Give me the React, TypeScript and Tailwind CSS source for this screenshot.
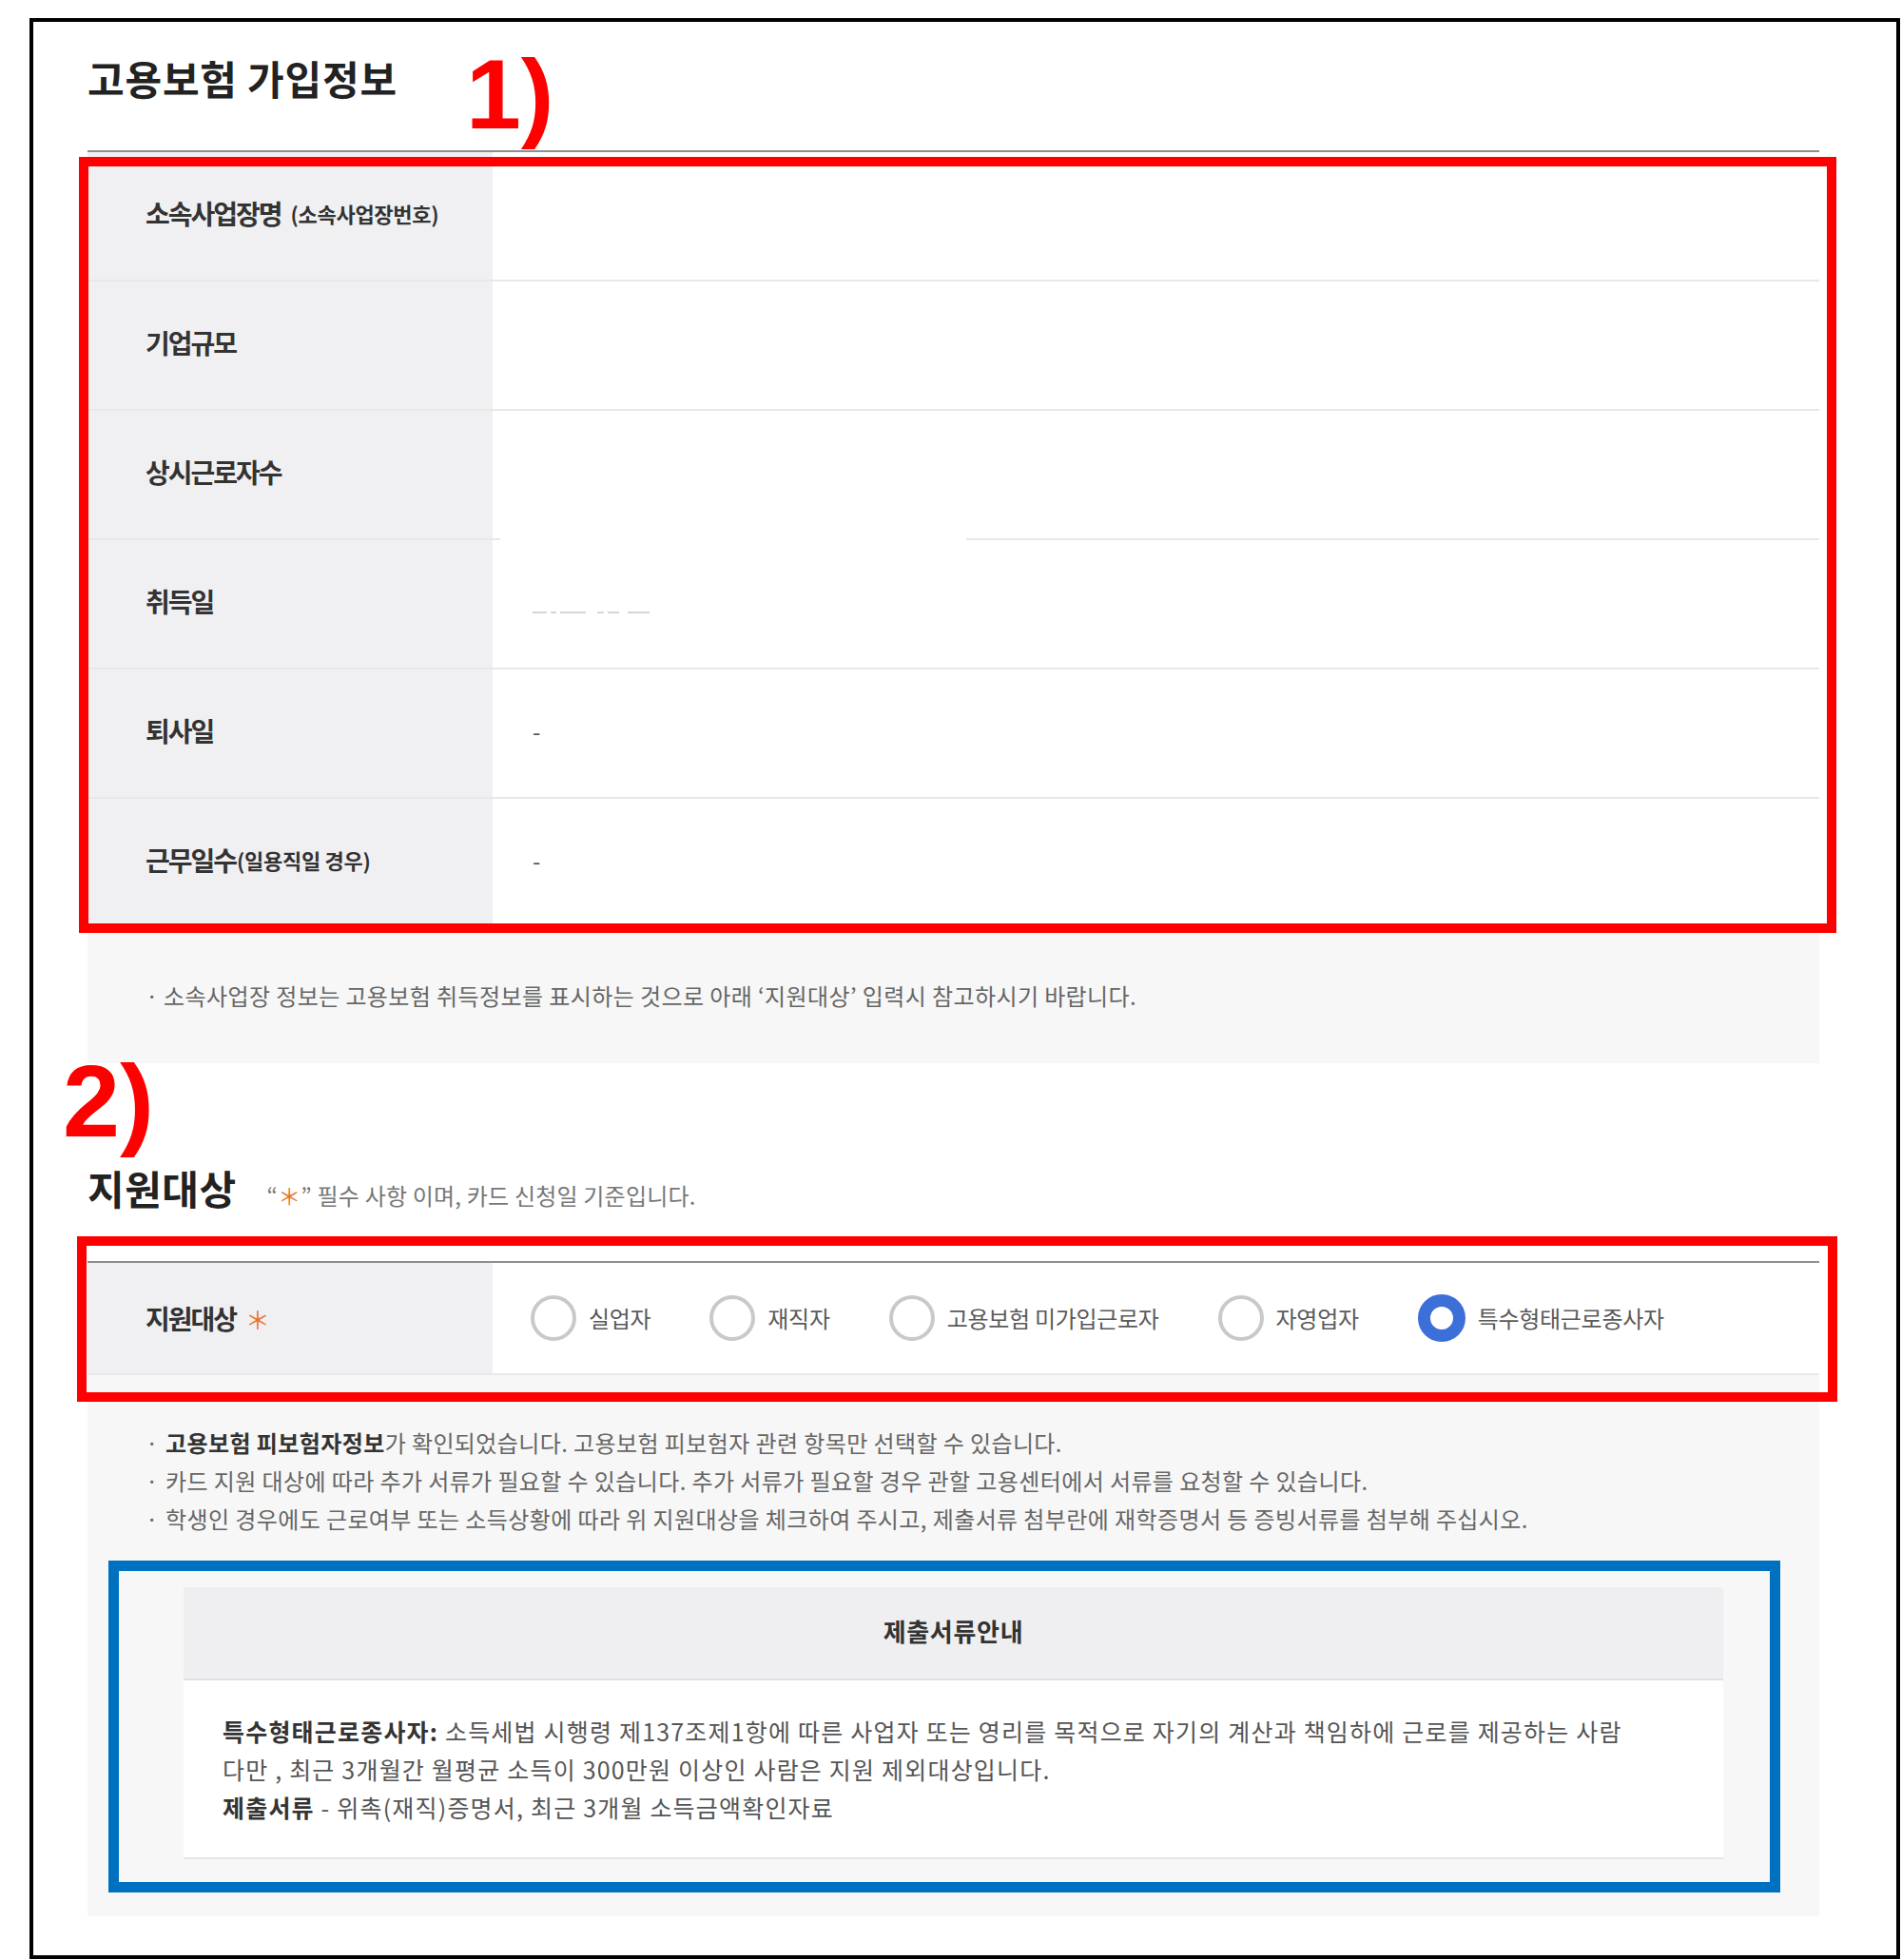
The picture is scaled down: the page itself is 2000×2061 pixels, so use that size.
const rows = [
  { label: "소속사업장명", sub: "(소속사업장번호)", subGap: true, value: null },
  { label: "기업규모", sub: null, value: null },
  { label: "상시근로자수", sub: null, value: null, gap: true },
  { label: "취득일", sub: null, value: "masked" },
  { label: "퇴사일", sub: null, value: "-" },
  { label: "근무일수", sub: "(일용직일 경우)", value: "-" },
];

const targets = ["실업자", "재직자", "고용보험 미가입근로자", "자영업자", "특수형태근로종사자"];

function MaskedDate() {
  return (
    <div className="flex items-center gap-[4px] mt-[22px]">
      <div className="h-[2px] w-[15px] bg-[#d6d6d6]" />
      <div className="h-[2px] w-[6px] bg-[#d6d6d6]" />
      <div className="h-[2px] w-[27px] bg-[#d6d6d6]" />
      <div className="h-[2px] w-[7px] bg-[#d6d6d6] ml-[8px]" />
      <div className="h-[2px] w-[12px] bg-[#d6d6d6]" />
      <div className="h-[2px] w-[23px] bg-[#d6d6d6] ml-[5px]" />
    </div>
  );
}

function Row({ row }: { row: (typeof rows)[number] }) {
  return (
    <div className={row.gap ? "flex flex-col" : "flex flex-col border-b-2 border-[#e8e8e8]"}>
      <div className="flex h-[134px]">
        <div className="w-[426px] bg-[#f0f0f2] pl-[61px] pb-[6px] flex items-center text-[28px] font-semibold tracking-[-2px] text-[#333]">
          {row.label}
          {row.sub && (
            <span className={row.subGap ? "ml-[10px] text-[22px] tracking-[-0.3px]" : "ml-[1px] text-[22px] tracking-[-0.3px]"}>
              {row.sub}
            </span>
          )}
        </div>
        <div className="flex-1 pl-[42px] pb-[4px] flex items-center text-[24px] text-[#555]">
          {row.value === "masked" ? <MaskedDate /> : row.value}
        </div>
      </div>
      {row.gap && (
        <div className="flex h-[2px]">
          <div className="w-[434px] bg-[#e8e8e8]" />
          <div className="w-[490px]" />
          <div className="flex-1 bg-[#e8e8e8]" />
        </div>
      )}
    </div>
  );
}

function Radio({ label, checked }: { label: string; checked?: boolean }) {
  return (
    <div className="flex items-center gap-[13px]">
      <div
        className={
          checked
            ? "w-[50px] h-[50px] rounded-full border-[13px] border-[#3d6fd8] bg-white"
            : "w-[48px] h-[48px] rounded-full border-[4px] border-[#c9c9c9] bg-white"
        }
      />
      <span className="text-[24px] tracking-[-0.3px] text-[#5a5a5a]">{label}</span>
    </div>
  );
}

export default function App() {
  return (
    <div className="relative w-[2000px] h-[2061px] bg-white pl-[31px] pt-[19px] font-['Noto_Sans_CJK_KR','Noto_Sans',sans-serif]">
      <div className="w-[1967px] h-[2041px] border-[4px] border-black pl-[57px]">
        <div className="w-[1821px]">
          {/* 고용보험 가입정보 */}
          <div className="h-[135px] pt-[34px]">
            <h1 className="text-[42px] leading-[50px] font-semibold tracking-[0.8px] text-[#222]">
              고용보험 가입정보
            </h1>
          </div>
          <div className="h-[2px] bg-[#8e8e8e]" />
          {rows.map((row) => (
            <Row key={row.label} row={row} />
          ))}
          <div className="h-[142px] bg-[#f7f7f7] pl-[61px] flex items-center text-[24px] tracking-[0.4px] text-[#666]">
            <span className="w-[19px]">·</span>
            소속사업장 정보는 고용보험 취득정보를 표시하는 것으로 아래 ‘지원대상’ 입력시 참고하시기 바랍니다.
          </div>

          {/* 지원대상 */}
          <div className="h-[208px] pt-[106px] flex items-baseline">
            <h2 className="text-[42px] leading-[50px] font-semibold tracking-[0.5px] text-[#222]">지원대상</h2>
            <p className="ml-[32px] text-[24px] tracking-[0.2px] text-[#777]">
              “<span className="text-[#e8762d]">＊</span>” 필수 사항 이며, 카드 신청일 기준입니다.
            </p>
          </div>
          <div className="h-[2px] bg-[#8e8e8e]" />
          <div className="flex h-[118px] border-b-2 border-[#e8e8e8]">
            <div className="w-[426px] bg-[#f0f0f2] pl-[61px] flex items-center text-[28px] font-semibold tracking-[-2px] text-[#333]">
              지원대상
              <span className="ml-[10px] text-[26px] tracking-normal text-[#e8762d] font-normal">＊</span>
            </div>
            <div className="flex-1 pl-[40px] flex items-center gap-[62px]">
              {targets.map((t, i) => (
                <Radio key={t} label={t} checked={i === targets.length - 1} />
              ))}
            </div>
          </div>
          <div className="h-[569px] bg-[#f7f7f7] pt-[51px] px-[61px]">
            <ul className="text-[24px] leading-[40px] tracking-[0.4px] text-[#666]">
              <li className="flex">
                <span className="w-[21px] shrink-0">·</span>
                <span>
                  <b className="font-semibold text-[#333]">고용보험 피보험자정보</b>가 확인되었습니다. 고용보험 피보험자 관련 항목만 선택할 수 있습니다.
                </span>
              </li>
              <li className="flex">
                <span className="w-[21px] shrink-0">·</span>
                <span>카드 지원 대상에 따라 추가 서류가 필요할 수 있습니다. 추가 서류가 필요할 경우 관할 고용센터에서 서류를 요청할 수 있습니다.</span>
              </li>
              <li className="flex">
                <span className="w-[21px] shrink-0">·</span>
                <span>학생인 경우에도 근로여부 또는 소득상황에 따라 위 지원대상을 체크하여 주시고, 제출서류 첨부란에 재학증명서 등 증빙서류를 첨부해 주십시오.</span>
              </li>
            </ul>
            <div className="mt-[52px] mx-[40px] bg-white">
              <div className="h-[98px] pb-[5px] bg-[#efeff1] border-b-2 border-[#e2e2e4] flex items-center justify-center text-[26px] font-semibold tracking-[0.7px] text-[#333]">
                제출서류안내
              </div>
              <div className="pt-[33px] pb-[33px] pl-[41px] border-b-2 border-[#e6e6e6] text-[25px] leading-[40px] tracking-[1.2px] text-[#555]">
                <p>
                  <b className="font-semibold text-[#333]">특수형태근로종사자:</b> 소득세법 시행령 제137조제1항에 따른 사업자 또는 영리를 목적으로 자기의 계산과 책임하에 근로를 제공하는 사람
                </p>
                <p>다만 , 최근 3개월간 월평균 소득이 300만원 이상인 사람은 지원 제외대상입니다.</p>
                <p>
                  <b className="font-semibold text-[#333]">제출서류</b> - 위촉(재직)증명서, 최근 3개월 소득금액확인자료
                </p>
              </div>
            </div>
          </div>
        </div>
      </div>

      {/* annotations */}
      <div className="absolute left-[83px] top-[165px] w-[1848px] h-[816px] border-[10px] border-[#ff0000]" />
      <div className="absolute left-[81px] top-[1300px] w-[1851px] h-[174px] border-[10px] border-[#ff0000]" />
      <div className="absolute left-[114px] top-[1641px] w-[1758px] h-[349px] border-[11px] border-[#0070c0]" />
      <div className="absolute left-[490px] top-[47px] text-[104px] leading-none font-bold text-[#ff0000] font-['Liberation_Sans',sans-serif]">
        1)
      </div>
      <div className="absolute left-[66px] top-[1104px] text-[108px] leading-none font-bold text-[#ff0000] font-['Liberation_Sans',sans-serif]">
        2)
      </div>
    </div>
  );
}
